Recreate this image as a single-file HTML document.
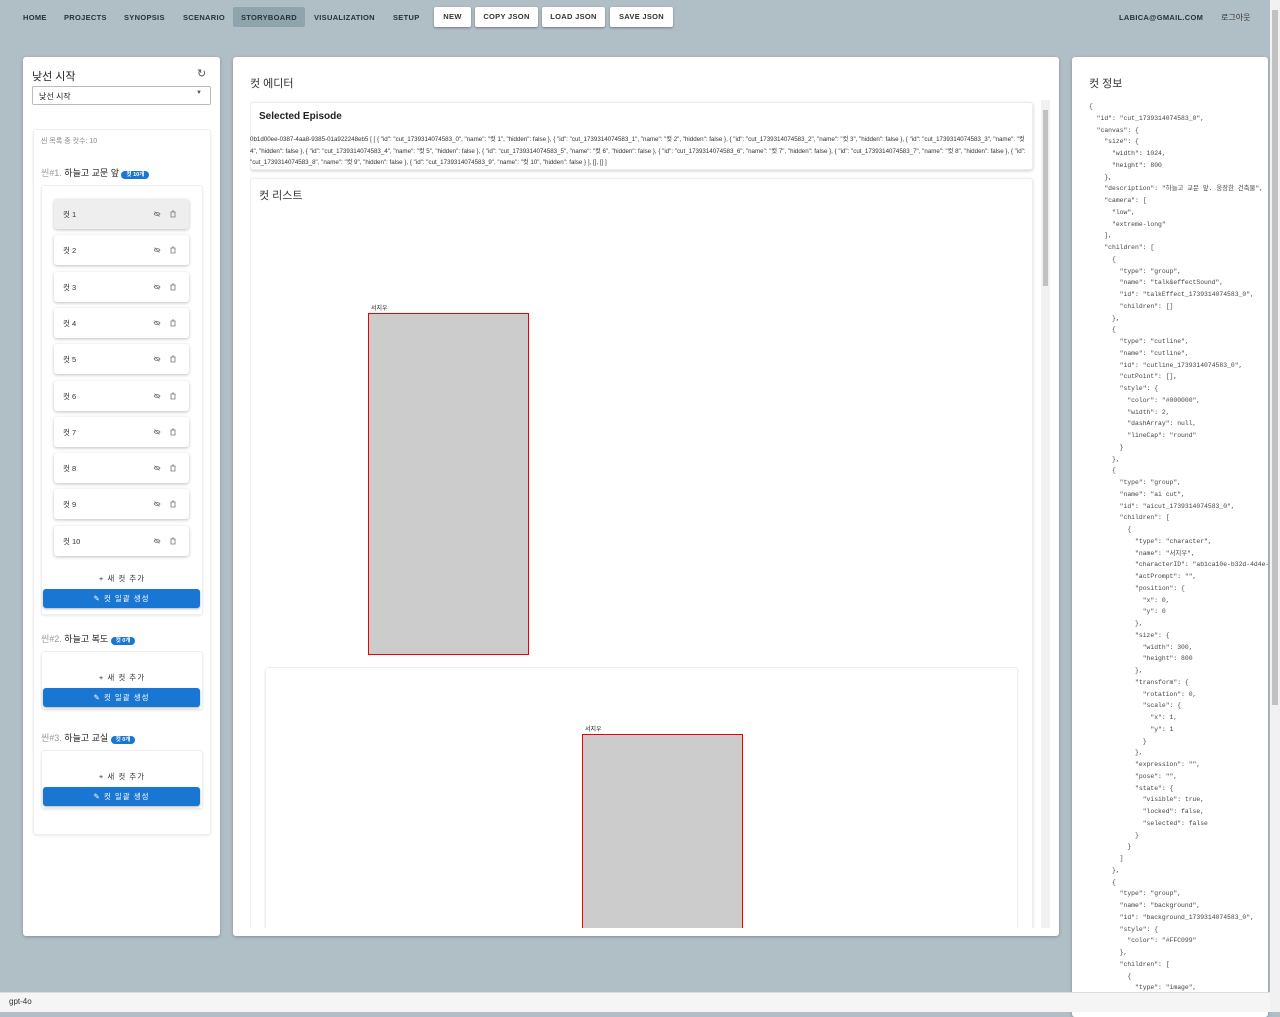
<!DOCTYPE html>
<html><head><meta charset="utf-8"><style>
*{box-sizing:border-box;margin:0;padding:0}
body{width:1280px;height:1012px;overflow:hidden;background:#b0bec5;font-family:"Liberation Sans","Noto Sans CJK KR",sans-serif;position:relative;color:#222}
.a{position:absolute}
.nav{font-size:7.5px;font-weight:bold;letter-spacing:.3px;color:#263238;top:13px}
.btn{top:7px;height:20px;background:#fff;border-radius:2px;box-shadow:0 1px 2px rgba(0,0,0,.35);font-size:7.5px;font-weight:bold;letter-spacing:.3px;color:#333;text-align:center;line-height:20px}
.panel{background:#fff;border-radius:3px;box-shadow:0 1px 3px rgba(0,0,0,.25)}
.card{background:#fff;border:1px solid #eee;border-radius:3px;box-shadow:0 1px 2px rgba(0,0,0,.08)}
.cut{left:54px;width:135px;height:30px;background:#fff;border-radius:3px;box-shadow:0 1px 3px rgba(0,0,0,.25);font-size:7.5px;color:#333}
.cut span{position:absolute;left:9px;top:10px}
.cut i{position:absolute;top:11px;width:8px;height:8px}
.blue{left:43px;width:157px;height:19px;background:#1976d2;border-radius:3px;color:#fff;font-size:7.5px;text-align:center;line-height:19px;box-shadow:0 1px 2px rgba(0,0,0,.3);letter-spacing:1px}
.add{left:41px;width:162px;text-align:center;font-size:7.5px;color:#333;letter-spacing:1px}
.badge{background:#1976d2;color:#fff;font-size:5.5px;border-radius:6px;padding:1px 5px;font-weight:bold;vertical-align:middle}
.sh{left:41px;font-size:9px;color:#222}
.sh b{color:#999;font-weight:normal}
pre{font-family:"Liberation Mono","Noto Sans CJK KR",monospace;font-size:6.4px;line-height:11.75px;color:#444}
</style></head><body>
<div class="a nav" style="left:23px">HOME</div>
<div class="a nav" style="left:64px">PROJECTS</div>
<div class="a nav" style="left:124px">SYNOPSIS</div>
<div class="a nav" style="left:183px">SCENARIO</div>
<div class="a" style="left:233px;top:7px;width:72px;height:20px;background:#90a4ae;border-radius:2px"></div>
<div class="a nav" style="left:241px">STORYBOARD</div>
<div class="a nav" style="left:314px">VISUALIZATION</div>
<div class="a nav" style="left:393px">SETUP</div>
<div class="a btn" style="left:434px;width:37px">NEW</div>
<div class="a btn" style="left:475px;width:63px">COPY JSON</div>
<div class="a btn" style="left:542px;width:63px">LOAD JSON</div>
<div class="a btn" style="left:610px;width:63px">SAVE JSON</div>
<div class="a nav" style="left:1119px">LABICA@GMAIL.COM</div>
<div class="a" style="left:1221px;top:12px;font-size:8px;color:#333">로그아웃</div>

<div class="a panel" style="left:23px;top:57px;width:197px;height:879px"></div>
<div class="a" style="left:32px;top:68px;font-size:11px">낮선 시작</div>
<div class="a" style="left:197px;top:67px;font-size:11px;color:#555">↻</div>
<div class="a" style="left:32px;top:86px;width:179px;height:19px;border:1px solid #bbb;border-radius:2px;font-size:8px;padding:4px 6px">낮선 시작<span style="position:absolute;right:8px;top:3px;font-size:6px;color:#555">▼</span></div>
<div class="a card" style="left:33px;top:129px;width:178px;height:706px"></div>
<div class="a" style="left:41px;top:136px;font-size:7px;color:#888">씬 목록 중 컷수: 10</div>
<div class="a sh" style="top:166px"><b>씬#1.</b> 하늘고 교문 앞 <span class="badge">컷 10개</span></div>
<div class="a card" style="left:41px;top:185px;width:162px;height:430px"></div>
<div class="a sh" style="top:632px"><b>씬#2.</b> 하늘고 복도 <span class="badge">컷 0개</span></div>
<div class="a card" style="left:41px;top:651px;width:162px;height:59px"></div>
<div class="a sh" style="top:731px"><b>씬#3.</b> 하늘고 교실 <span class="badge">컷 0개</span></div>
<div class="a card" style="left:41px;top:750px;width:162px;height:59px"></div>
<div id="cuts"></div>
<div class="a add" style="top:573px">+ 새 컷 추가</div>
<div class="a blue" style="top:589px">✎ 컷 일괄 생성</div>
<div class="a add" style="top:672px">+ 새 컷 추가</div>
<div class="a blue" style="top:688px">✎ 컷 일괄 생성</div>
<div class="a add" style="top:771px">+ 새 컷 추가</div>
<div class="a blue" style="top:787px">✎ 컷 일괄 생성</div>

<div class="a panel" style="left:233px;top:57px;width:826px;height:879px"></div>
<div class="a" style="left:250px;top:75px;font-size:11px;color:#333">컷 에디터</div>
<div class="a" style="left:250px;top:100px;width:791px;height:828px;overflow:hidden">
 <div class="a card" style="left:0;top:2px;width:783px;height:68px;box-shadow:0 1px 3px rgba(0,0,0,.2)"></div>
 <div class="a" style="left:9px;top:11px;font-size:10px;font-weight:bold">Selected Episode</div>
 <div class="a" style="left:0;top:34px;width:783px;font-size:6.2px;line-height:11.5px;color:#333">0b1d00ee-0387-4aa8-9385-01a922248eb5 [ [ { "id": "cut_1739314074583_0", "name": "컷 1", "hidden": false }, { "id": "cut_1739314074583_1", "name": "컷 2", "hidden": false }, { "id": "cut_1739314074583_2", "name": "컷 3", "hidden": false }, { "id": "cut_1739314074583_3", "name": "컷 4", "hidden": false }, { "id": "cut_1739314074583_4", "name": "컷 5", "hidden": false }, { "id": "cut_1739314074583_5", "name": "컷 6", "hidden": false }, { "id": "cut_1739314074583_6", "name": "컷 7", "hidden": false }, { "id": "cut_1739314074583_7", "name": "컷 8", "hidden": false }, { "id": "cut_1739314074583_8", "name": "컷 9", "hidden": false }, { "id": "cut_1739314074583_9", "name": "컷 10", "hidden": false } ], [], [] ]</div>
 <div class="a card" style="left:0;top:78px;width:783px;height:800px;box-shadow:0 1px 3px rgba(0,0,0,.15)"></div>
 <div class="a" style="left:9px;top:87px;font-size:11px;color:#333">컷 리스트</div>
 <div class="a" style="left:121px;top:203px;font-size:6px">서지우</div>
 <div class="a" style="left:118px;top:213px;width:161px;height:342px;background:#ccc;border:1px solid #e00"></div>
 <div class="a card" style="left:15px;top:567px;width:753px;height:300px"></div>
 <div class="a" style="left:335px;top:624px;font-size:6px">서지우</div>
 <div class="a" style="left:332px;top:634px;width:161px;height:300px;background:#ccc;border:1px solid #e00"></div>
</div>
<div class="a" style="left:1041px;top:100px;width:9px;height:828px;background:#f1f1f1"></div>
<div class="a" style="left:1043px;top:110px;width:5px;height:176px;background:#c1c1c1"></div>

<div class="a panel" style="left:1072px;top:57px;width:196px;height:960px;overflow:hidden">
<div class="a" style="left:17px;top:18px;font-size:11px;color:#333">컷 정보</div>
<pre class="a" style="left:17px;top:44px">{
  "id": "cut_1739314074583_0",
  "canvas": {
    "size": {
      "width": 1024,
      "height": 800
    },
    "description": "하늘고 교문 앞. 웅장한 건축물",
    "camera": [
      "low",
      "extreme-long"
    ],
    "children": [
      {
        "type": "group",
        "name": "talk&effectSound",
        "id": "talkEffect_1739314074583_0",
        "children": []
      },
      {
        "type": "cutline",
        "name": "cutline",
        "id": "cutline_1739314074583_0",
        "cutPoint": [],
        "style": {
          "color": "#000000",
          "width": 2,
          "dashArray": null,
          "lineCap": "round"
        }
      },
      {
        "type": "group",
        "name": "ai cut",
        "id": "aicut_1739314074583_0",
        "children": [
          {
            "type": "character",
            "name": "서지우",
            "characterID": "ab1ca10e-b32d-4d4e-a",
            "actPrompt": "",
            "position": {
              "x": 0,
              "y": 0
            },
            "size": {
              "width": 300,
              "height": 800
            },
            "transform": {
              "rotation": 0,
              "scale": {
                "x": 1,
                "y": 1
              }
            },
            "expression": "",
            "pose": "",
            "state": {
              "visible": true,
              "locked": false,
              "selected": false
            }
          }
        ]
      },
      {
        "type": "group",
        "name": "background",
        "id": "background_1739314074583_0",
        "style": {
          "color": "#FFC099"
        },
        "children": [
          {
            "type": "image",</pre>
</div>
<div class="a" style="left:1270px;top:0;width:10px;height:1012px;background:#f1f1f1"></div>
<div class="a" style="left:1272px;top:10px;width:6px;height:695px;background:#c1c1c1"></div>
<div class="a" style="left:0;top:992px;width:1270px;height:20px;background:#f5f5f5;border-top:1px solid #ddd"></div>
<div class="a" style="left:9px;top:997px;font-size:8px;color:#333">gpt-4o</div>
<script>
var h='';for(var i=0;i<10;i++){var t=199+i*36.3;h+='<div class="a cut" style="top:'+t+'px;'+(i==0?'background:#eee;':'')+'"><span>컷 '+(i+1)+'</span><i style="left:99px"><svg width="8" height="8" viewBox="0 0 8 8"><path d="M1 4c1.5-2 4.5-2 6 0c-1.5 2-4.5 2-6 0M1.5 1.5l5 5" stroke="#777" fill="none" stroke-width=".8"/></svg></i><i style="left:115px"><svg width="8" height="8" viewBox="0 0 8 8"><path d="M2 2h4v5h-4zM1.5 2h5M3 1h2" stroke="#777" fill="none" stroke-width=".8"/></svg></i></div>'}
document.getElementById('cuts').innerHTML=h;
</script>
</body></html>
